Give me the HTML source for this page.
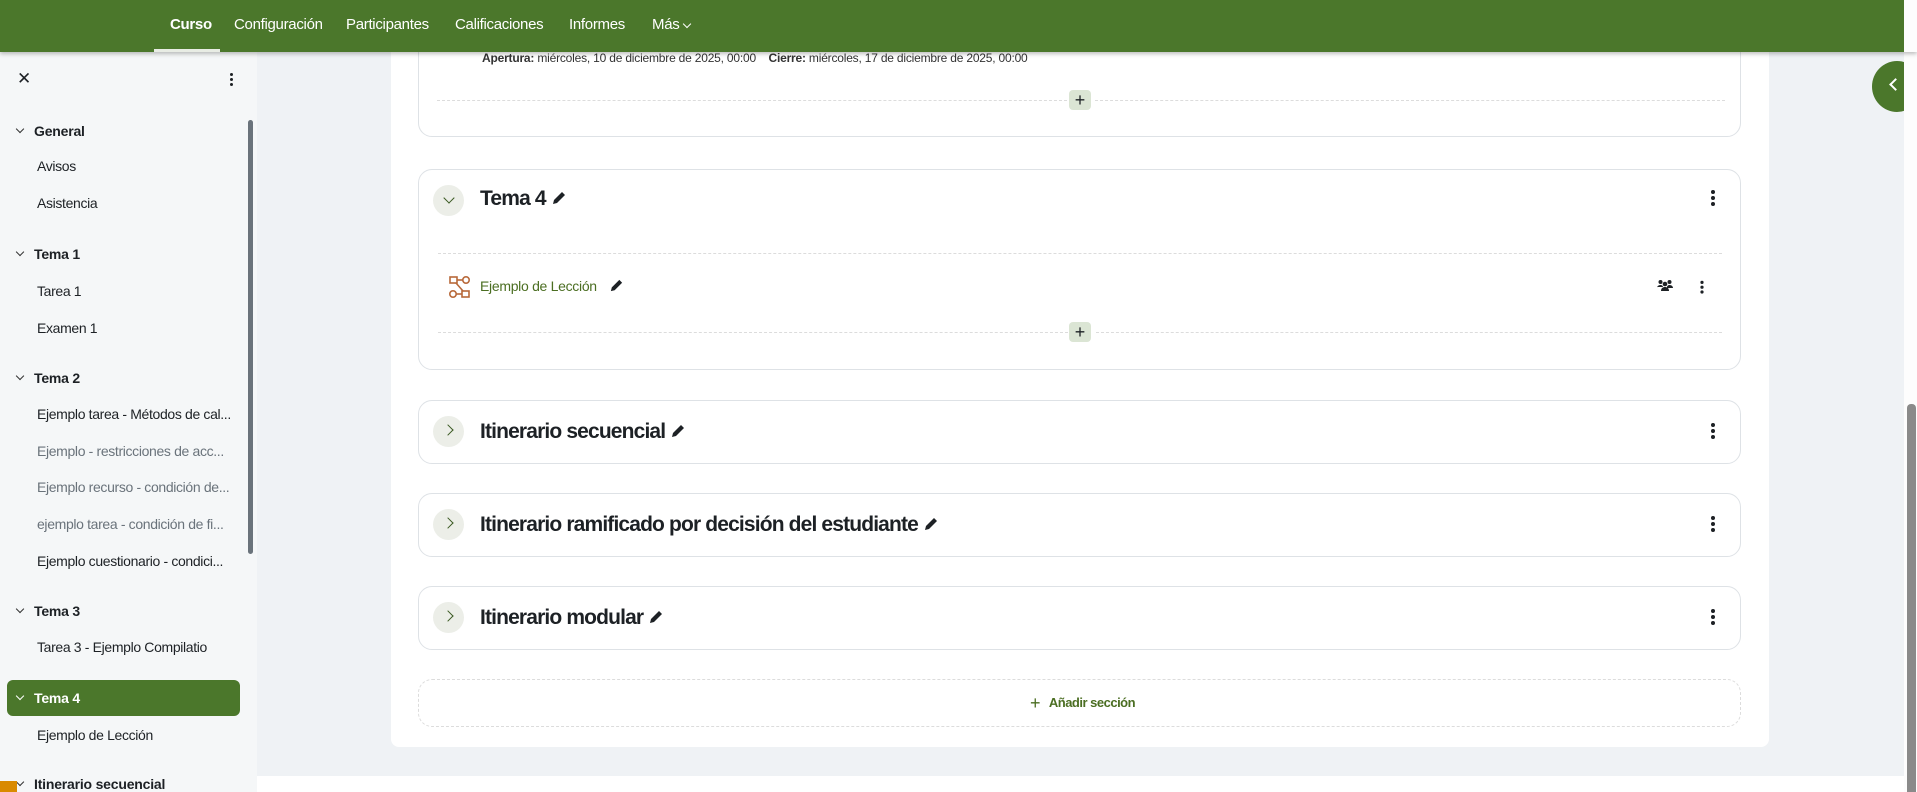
<!DOCTYPE html>
<html><head><meta charset="utf-8"><style>
*{box-sizing:border-box;margin:0;padding:0}
body{width:1917px;height:792px;overflow:hidden;position:relative;font-family:"Liberation Sans",sans-serif;background:#fff;color:#1d2125}
.abs{position:absolute}
#nav{left:0;top:0;width:1917px;height:52px;background:#4b772b;box-shadow:0 2px 4px rgba(0,0,0,.25);z-index:5}
#nav span{position:absolute;top:16px;color:#fff;font-size:15px;letter-spacing:-.3px}
#side{left:0;top:52px;width:257px;height:740px;background:#f5f7f8}
.sh{position:absolute;left:34px;font-size:14px;font-weight:bold;color:#1d2125;letter-spacing:-.2px}
.sh:before{content:"";position:absolute;left:-17px;top:3px;width:5px;height:5px;border-right:1.3px solid #333;border-bottom:1.3px solid #333;transform:rotate(45deg)}
.sh.w:before{border-color:#fff}
.si{position:absolute;left:37px;font-size:14px;color:#1d2125;white-space:nowrap;letter-spacing:-.35px}
.dim{color:#6a737b}
#main{left:257px;top:52px;width:1647px;height:724px;background:#eff2f5}
.card{position:absolute;left:418px;width:1323px;background:#fff;border:1px solid #dee2e6;border-radius:14px}
.dash{position:absolute;height:0;border-top:1px dashed #dcdcdc}
.plus{position:absolute;width:22px;height:20px;background:#dbe5d4;border-radius:4px;font-size:18px;line-height:20px;text-align:center;color:#1d2125}
.circ{position:absolute;left:14px;width:31px;height:31px;border-radius:50%;background:#eceee8}
.circ:after{content:"";position:absolute;left:11px;top:10px;width:7px;height:7px;border-right:1.5px solid #3b5a22;border-bottom:1.5px solid #3b5a22;transform:rotate(-45deg)}
.circ.open:after{left:12px;top:9px;transform:rotate(45deg)}
.tt{position:absolute;left:61px;font-size:21px;font-weight:bold;letter-spacing:-.85px;white-space:nowrap}
.kb{position:absolute;width:4px}
.kb i{display:block;width:4px;height:4px;border-radius:50%;background:#1d2125;margin-bottom:2px}
</style></head><body>
<div id="nav" class="abs">
<span style="left:170px;font-weight:bold">Curso</span>
<div class="abs" style="left:154px;top:49px;width:66px;height:3px;background:#e8ece4"></div>
<span style="left:234px">Configuración</span>
<span style="left:346px">Participantes</span>
<span style="left:455px">Calificaciones</span>
<span style="left:569px">Informes</span>
<span style="left:652px">Más</span>
<div class="abs" style="left:684px;top:21px;width:6px;height:6px;border-right:1.3px solid #fff;border-bottom:1.3px solid #fff;transform:rotate(45deg)"></div>
</div>
<div id="side" class="abs">
<div class="abs" style="left:17px;top:17px;font-size:17px">✕</div>
<div class="kb" style="left:230px;top:21px"><i style="width:3px;height:3px"></i><i style="width:3px;height:3px"></i><i style="width:3px;height:3px"></i></div>
<div class="abs" style="left:248px;top:68px;width:5px;height:434px;background:#6a737b;border-radius:3px"></div>
<div class="sh" style="top:71px">General</div>
<div class="si" style="top:106px">Avisos</div>
<div class="si" style="top:143px">Asistencia</div>
<div class="sh" style="top:194px">Tema 1</div>
<div class="si" style="top:231px">Tarea 1</div>
<div class="si" style="top:268px">Examen 1</div>
<div class="sh" style="top:318px">Tema 2</div>
<div class="si" style="top:354px">Ejemplo tarea - Métodos de cal...</div>
<div class="si dim" style="top:391px">Ejemplo - restricciones de acc...</div>
<div class="si dim" style="top:427px">Ejemplo recurso - condición de...</div>
<div class="si dim" style="top:464px">ejemplo tarea - condición de fi...</div>
<div class="si" style="top:501px">Ejemplo cuestionario - condici...</div>
<div class="sh" style="top:551px">Tema 3</div>
<div class="si" style="top:587px">Tarea 3 - Ejemplo Compilatio</div>
<div class="abs" style="left:7px;top:628px;width:233px;height:36px;background:#4b772b;border-radius:6px"></div>
<div class="sh w" style="top:638px;color:#fff">Tema 4</div>
<div class="si" style="top:675px">Ejemplo de Lección</div>
<div class="sh" style="top:724px">Itinerario secuencial</div>
<div class="abs" style="left:0;top:729px;width:17px;height:11px;background:#d98a00"></div>
</div>
<div id="main" class="abs"></div>
<div class="abs" style="left:391px;top:52px;width:1378px;height:695px;background:#fff;border-radius:0 0 8px 8px"></div>

<div class="card" style="top:20px;height:117px"></div>
<div class="abs" style="left:482px;top:51px;font-size:12px;color:#333;letter-spacing:-.2px;white-space:nowrap"><b>Apertura:</b> miércoles, 10 de diciembre de 2025, 00:00 &nbsp;&nbsp; <b>Cierre:</b> miércoles, 17 de diciembre de 2025, 00:00</div>
<div class="dash" style="left:437px;width:630px;top:100px"></div>
<div class="dash" style="left:1095px;width:630px;top:100px"></div>
<div class="plus" style="left:1069px;top:90px">+</div>

<div class="card" style="top:169px;height:201px">
<div class="circ open" style="top:15px"></div>
<div class="tt" style="top:17px">Tema 4 <svg width="16" height="16" viewBox="0 0 16 16" style="vertical-align:-1px"><path d="M2 14l1-4 8-8 3 3-8 8z" fill="#1d2125"/></svg></div>
<div class="kb" style="left:1292px;top:20px"><i></i><i></i><i></i></div>
<div class="dash" style="left:19px;width:1284px;top:83px"></div>
<svg class="abs" style="left:30px;top:106px" width="22" height="22" viewBox="0 0 22 22" fill="none" stroke="#b8693a" stroke-width="1.6"><rect x="1" y="1" width="7" height="6"/><circle cx="17" cy="4" r="3.2"/><line x1="7" y1="7" x2="14" y2="15"/><circle cx="4" cy="18" r="3.2"/><rect x="13" y="15" width="7" height="6"/><line x1="8" y1="4" x2="14" y2="4"/><line x1="7" y1="18" x2="13" y2="18"/></svg>
<div class="abs" style="left:61px;top:108px;font-size:14px;color:#4b6e22;letter-spacing:-.3px">Ejemplo de Lección</div>
<svg class="abs" style="left:190px;top:108px" width="15" height="15" viewBox="0 0 16 16"><path d="M2 14l1-4 8-8 3 3-8 8z" fill="#1d2125"/></svg>
<svg class="abs" style="left:1238px;top:109px" width="16" height="13" viewBox="0 0 16 13" fill="#1d2125"><circle cx="3.5" cy="3" r="2"/><circle cx="12.5" cy="3" r="2"/><circle cx="8" cy="5" r="2.3"/><path d="M0 9c0-2 2-3 3.5-3S6 7 6 8H0zM10 8c0-1 1-2 2.5-2S16 7 16 9h-6z"/><path d="M4 12c0-3 2-4 4-4s4 1 4 4z"/></svg>
<div class="kb" style="left:1281px;top:109px;transform:scale(.8)"><i></i><i></i><i></i></div>
<div class="dash" style="left:19px;width:630px;top:162px"></div>
<div class="dash" style="left:677px;width:626px;top:162px"></div>
<div class="plus" style="left:650px;top:152px">+</div>
</div>

<div class="card" style="top:400px;height:64px">
<div class="circ" style="top:15px"></div>
<div class="tt" style="top:19px">Itinerario secuencial <svg width="16" height="16" viewBox="0 0 16 16" style="vertical-align:-1px"><path d="M2 14l1-4 8-8 3 3-8 8z" fill="#1d2125"/></svg></div>
<div class="kb" style="left:1292px;top:22px"><i></i><i></i><i></i></div>
</div>
<div class="card" style="top:493px;height:64px">
<div class="circ" style="top:15px"></div>
<div class="tt" style="top:19px">Itinerario ramificado por decisión del estudiante <svg width="16" height="16" viewBox="0 0 16 16" style="vertical-align:-1px"><path d="M2 14l1-4 8-8 3 3-8 8z" fill="#1d2125"/></svg></div>
<div class="kb" style="left:1292px;top:22px"><i></i><i></i><i></i></div>
</div>
<div class="card" style="top:586px;height:64px">
<div class="circ" style="top:15px"></div>
<div class="tt" style="top:19px">Itinerario modular <svg width="16" height="16" viewBox="0 0 16 16" style="vertical-align:-1px"><path d="M2 14l1-4 8-8 3 3-8 8z" fill="#1d2125"/></svg></div>
<div class="kb" style="left:1292px;top:22px"><i></i><i></i><i></i></div>
</div>
<div class="abs" style="left:418px;top:679px;width:1323px;height:48px;border:1px dashed #dcdcdc;border-radius:14px"></div>
<div class="abs" style="left:1030px;top:693px;font-size:13px;color:#4b6e22;font-weight:bold;letter-spacing:-.5px"><span style="font-size:18px;font-weight:normal;vertical-align:-2px">+</span>&nbsp;&nbsp; Añadir sección</div>

<div class="abs" style="left:1872px;top:61px;width:50px;height:51px;border-radius:50%;background:#4b772b"></div>
<div class="abs" style="left:1891px;top:80px;width:9px;height:9px;border-left:2.5px solid #fff;border-bottom:2.5px solid #fff;transform:rotate(45deg)"></div>
<div class="abs" style="left:1904px;top:52px;width:13px;height:740px;background:#fdfdfd"></div>
<div class="abs" style="left:1904px;top:0;width:13px;height:52px;background:#fdfdfd;z-index:6"></div>
<div class="abs" style="left:1907px;top:404px;width:9px;height:388px;background:#8a8a8a;border-radius:4px 4px 0 0"></div>
</body></html>
